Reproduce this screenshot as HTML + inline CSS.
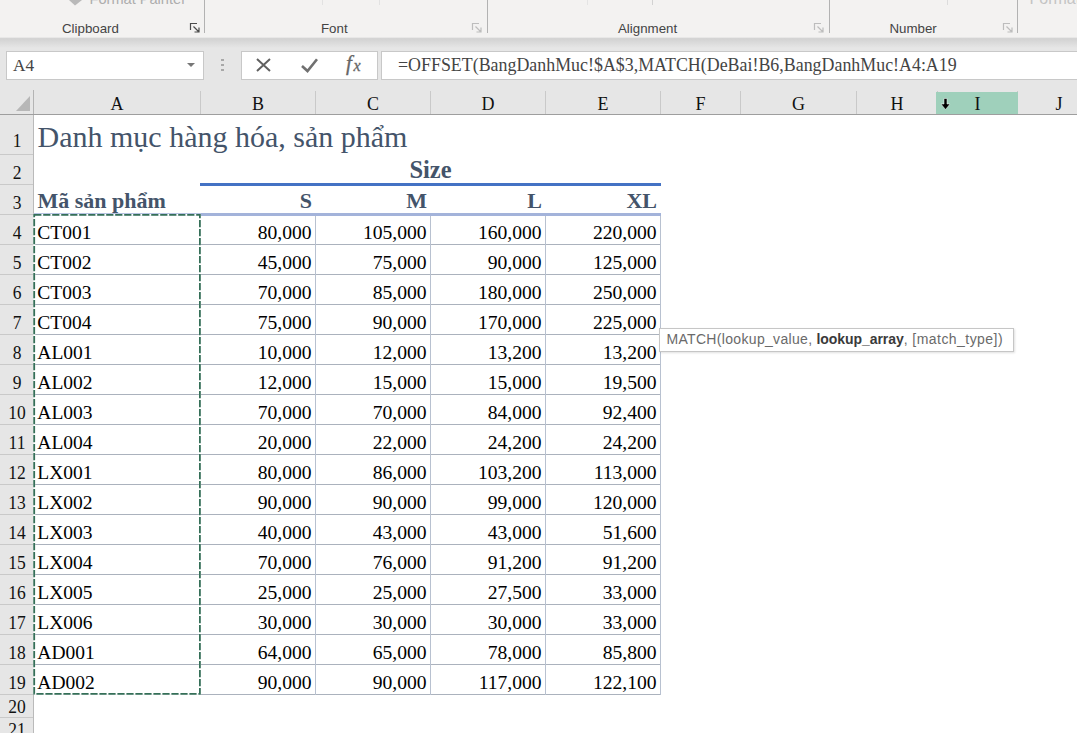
<!DOCTYPE html>
<html><head><meta charset="utf-8"><title>Excel</title>
<style>
html,body{margin:0;padding:0;}
body{width:1077px;height:733px;overflow:hidden;position:relative;background:#fff;font-family:"Liberation Serif",serif;color:#000;}
div,span{position:absolute;box-sizing:border-box;white-space:nowrap;}
svg{position:absolute;overflow:visible;}
#ribbon{left:0;top:0;width:1077px;height:38px;background:#f3f2f1;}
#shadow{left:0;top:37px;width:1077px;height:11px;background:linear-gradient(#f3f2f1 0,#d4d4d4 13%,#d3d3d3 20%,#e6e6e6 100%);}
#fbar{left:0;top:38px;width:1077px;height:77px;background:#e6e6e6;}
.sans{font-family:"Liberation Sans",sans-serif;}
.gsep{top:0;width:1px;height:33px;background:#b2b2b2;}
.box{background:#fff;border:1px solid #c8c8c8;height:29px;top:51px;}
.chs{top:91px;width:1px;height:23px;background:#c9c9c9;}
.rhs{left:0;width:33px;height:1px;background:#c9c9c9;}
.hl{height:1px;background:#abb2bd;}
.vl{width:1px;background:#b8c1d0;}
</style></head><body>

<div id="ribbon"></div><div id="fbar"></div><div id="shadow"></div>
<div class="sans" style="top:19.89px;font-size:13.3px;line-height:17px;color:#444;left:62px;">Clipboard</div>
<div class="sans" style="top:19.89px;font-size:13.3px;line-height:17px;color:#444;left:321px;">Font</div>
<div class="sans" style="top:19.89px;font-size:13.3px;line-height:17px;color:#444;left:618px;">Alignment</div>
<div class="sans" style="top:19.89px;font-size:13.3px;line-height:17px;color:#444;left:889.5px;">Number</div>
<div class="sans" style="top:-10.06px;font-size:14.6px;line-height:19px;color:#adadad;left:89.5px;">Format Painter</div>
<div class="sans" style="top:-11.54px;font-size:16px;line-height:21px;color:#c4c4c4;left:1029.5px;">Format</div>
<svg style="left:68px;top:0" width="15" height="6" viewBox="0 0 15 6"><path d="M1 0L7 5.5L14 0Z" fill="#b9b9b9"/></svg>
<div class="gsep" style="left:204px"></div>
<div class="gsep" style="left:487px"></div>
<div class="gsep" style="left:829px"></div>
<div class="gsep" style="left:1017px"></div>
<div style="left:587px;top:0;width:1px;height:5px;background:#e4e4e4"></div>
<div style="left:652px;top:0;width:1px;height:5px;background:#d2d2d2"></div>
<div style="left:947px;top:0;width:1px;height:5px;background:#dcdcdc"></div>
<div style="left:322px;top:0;width:1px;height:5px;background:#e2e2e2"></div>
<div style="left:379px;top:0;width:1px;height:5px;background:#e2e2e2"></div>
<svg style="left:190px;top:23px" width="10" height="10" viewBox="0 0 10 10"><path d="M0.5 7V0.5H7 M3.5 3.5L9 9 M9 4.5V9H4.5" fill="none" stroke="#4a4a4a" stroke-width="1.2"/></svg>
<svg style="left:472px;top:23px" width="10" height="10" viewBox="0 0 10 10"><path d="M0.5 7V0.5H7 M3.5 3.5L9 9 M9 4.5V9H4.5" fill="none" stroke="#bdbdbd" stroke-width="1.2"/></svg>
<svg style="left:814px;top:23px" width="10" height="10" viewBox="0 0 10 10"><path d="M0.5 7V0.5H7 M3.5 3.5L9 9 M9 4.5V9H4.5" fill="none" stroke="#bdbdbd" stroke-width="1.2"/></svg>
<svg style="left:1003px;top:23px" width="10" height="10" viewBox="0 0 10 10"><path d="M0.5 7V0.5H7 M3.5 3.5L9 9 M9 4.5V9H4.5" fill="none" stroke="#bdbdbd" stroke-width="1.2"/></svg>
<div class="box" style="left:6px;width:198px"></div>
<div style="top:55.16px;font-size:17.3px;line-height:22px;color:#444;left:13px;">A4</div>
<svg style="left:187px;top:63px" width="8" height="4" viewBox="0 0 8 4"><path d="M0 0H8L4 4Z" fill="#777"/></svg>
<div style="left:221px;top:59px;width:3px;height:2px;background:#a8a8a8"></div>
<div style="left:221px;top:64px;width:3px;height:2px;background:#a8a8a8"></div>
<div style="left:221px;top:69px;width:3px;height:2px;background:#a8a8a8"></div>
<div class="box" style="left:241px;width:137px"></div>
<svg style="left:256px;top:58px" width="15" height="14" viewBox="0 0 15 14"><path d="M1 1L14 13M14 1L1 13" stroke="#606060" stroke-width="2" fill="none"/></svg>
<svg style="left:301px;top:58px" width="17" height="14" viewBox="0 0 17 14"><path d="M1 8L6.5 13L16 1.2" stroke="#707070" stroke-width="2.6" fill="none"/></svg>
<div style="top:49.91px;font-size:21px;line-height:27px;color:#666;left:346px;-webkit-text-stroke:0.3px #666;"><i>f</i></div>
<div style="top:54.90px;font-size:16px;line-height:21px;color:#666;left:353.5px;-webkit-text-stroke:0.3px #666;"><i>x</i></div>
<div class="box" style="left:381px;width:710px"></div>
<div style="top:54.46px;font-size:17.9px;line-height:23px;color:#444;left:398px;">=OFFSET(BangDanhMuc!$A$3,MATCH(DeBai!B6,BangDanhMuc!A4:A19</div>
<div style="top:93.12px;font-size:18px;line-height:23px;color:#111;left:33.5px;width:167px;text-align:center;">A</div>
<div class="chs" style="left:200px"></div>
<div style="top:93.12px;font-size:18px;line-height:23px;color:#111;left:200.5px;width:115px;text-align:center;">B</div>
<div class="chs" style="left:315px"></div>
<div style="top:93.12px;font-size:18px;line-height:23px;color:#111;left:315.5px;width:115px;text-align:center;">C</div>
<div class="chs" style="left:430px"></div>
<div style="top:93.12px;font-size:18px;line-height:23px;color:#111;left:430.5px;width:115px;text-align:center;">D</div>
<div class="chs" style="left:545px"></div>
<div style="top:93.12px;font-size:18px;line-height:23px;color:#111;left:545.5px;width:115px;text-align:center;">E</div>
<div class="chs" style="left:660px"></div>
<div style="top:93.12px;font-size:18px;line-height:23px;color:#111;left:660.5px;width:80px;text-align:center;">F</div>
<div class="chs" style="left:740px"></div>
<div style="top:93.12px;font-size:18px;line-height:23px;color:#111;left:740.5px;width:116px;text-align:center;">G</div>
<div class="chs" style="left:856px"></div>
<div style="top:93.12px;font-size:18px;line-height:23px;color:#111;left:856.5px;width:81px;text-align:center;">H</div>
<div class="chs" style="left:937px"></div>
<div class="chs" style="left:1017px"></div>
<div style="top:93.12px;font-size:18px;line-height:23px;color:#111;left:1017.5px;width:83px;text-align:center;">J</div>
<div class="chs" style="left:1100px"></div>
<div style="left:936px;top:92px;width:82px;height:22px;background:#9fd0bb"></div>
<div style="top:93.12px;font-size:18px;line-height:23px;color:#111;left:937.5px;width:80px;text-align:center;">I</div>
<div style="left:0;top:114px;width:1077px;height:1px;background:#9e9e9e"></div>
<div style="left:33px;top:90px;width:1px;height:24px;background:#b4b4b4"></div>
<svg style="left:16px;top:96px" width="14" height="15" viewBox="0 0 14 15"><path d="M14 0V15H0Z" fill="#b7b7b7"/></svg>
<svg style="left:940px;top:98px" width="11" height="12" viewBox="0 0 11 12"><path d="M4 0.5H7V6H10L5.5 11.5L1 6H4Z" fill="#000" stroke="#fff" stroke-width="0.5"/></svg>
<div style="left:0;top:115px;width:33px;height:618px;background:#e6e6e6"></div>
<div style="left:33px;top:115px;width:1px;height:618px;background:#bababa"></div>
<div style="top:129.59px;font-size:17.5px;line-height:23px;color:#111;left:0.5px;width:33px;text-align:center;transform:scaleY(1.05);transform-origin:50% 80%;">1</div>
<div class="rhs" style="top:154px"></div>
<div style="top:162.19px;font-size:17.5px;line-height:23px;color:#111;left:0.5px;width:33px;text-align:center;transform:scaleY(1.05);transform-origin:50% 80%;">2</div>
<div class="rhs" style="top:184px"></div>
<div style="top:192.19px;font-size:17.5px;line-height:23px;color:#111;left:0.5px;width:33px;text-align:center;transform:scaleY(1.05);transform-origin:50% 80%;">3</div>
<div class="rhs" style="top:214px"></div>
<div style="top:222.19px;font-size:17.5px;line-height:23px;color:#111;left:0.5px;width:33px;text-align:center;transform:scaleY(1.05);transform-origin:50% 80%;">4</div>
<div class="rhs" style="top:244px"></div>
<div style="top:252.19px;font-size:17.5px;line-height:23px;color:#111;left:0.5px;width:33px;text-align:center;transform:scaleY(1.05);transform-origin:50% 80%;">5</div>
<div class="rhs" style="top:274px"></div>
<div style="top:282.19px;font-size:17.5px;line-height:23px;color:#111;left:0.5px;width:33px;text-align:center;transform:scaleY(1.05);transform-origin:50% 80%;">6</div>
<div class="rhs" style="top:304px"></div>
<div style="top:312.19px;font-size:17.5px;line-height:23px;color:#111;left:0.5px;width:33px;text-align:center;transform:scaleY(1.05);transform-origin:50% 80%;">7</div>
<div class="rhs" style="top:334px"></div>
<div style="top:342.19px;font-size:17.5px;line-height:23px;color:#111;left:0.5px;width:33px;text-align:center;transform:scaleY(1.05);transform-origin:50% 80%;">8</div>
<div class="rhs" style="top:364px"></div>
<div style="top:372.19px;font-size:17.5px;line-height:23px;color:#111;left:0.5px;width:33px;text-align:center;transform:scaleY(1.05);transform-origin:50% 80%;">9</div>
<div class="rhs" style="top:394px"></div>
<div style="top:402.19px;font-size:17.5px;line-height:23px;color:#111;left:0.5px;width:33px;text-align:center;transform:scaleY(1.05);transform-origin:50% 80%;">10</div>
<div class="rhs" style="top:424px"></div>
<div style="top:432.19px;font-size:17.5px;line-height:23px;color:#111;left:0.5px;width:33px;text-align:center;transform:scaleY(1.05);transform-origin:50% 80%;">11</div>
<div class="rhs" style="top:454px"></div>
<div style="top:462.19px;font-size:17.5px;line-height:23px;color:#111;left:0.5px;width:33px;text-align:center;transform:scaleY(1.05);transform-origin:50% 80%;">12</div>
<div class="rhs" style="top:484px"></div>
<div style="top:492.19px;font-size:17.5px;line-height:23px;color:#111;left:0.5px;width:33px;text-align:center;transform:scaleY(1.05);transform-origin:50% 80%;">13</div>
<div class="rhs" style="top:514px"></div>
<div style="top:522.19px;font-size:17.5px;line-height:23px;color:#111;left:0.5px;width:33px;text-align:center;transform:scaleY(1.05);transform-origin:50% 80%;">14</div>
<div class="rhs" style="top:544px"></div>
<div style="top:552.19px;font-size:17.5px;line-height:23px;color:#111;left:0.5px;width:33px;text-align:center;transform:scaleY(1.05);transform-origin:50% 80%;">15</div>
<div class="rhs" style="top:574px"></div>
<div style="top:582.19px;font-size:17.5px;line-height:23px;color:#111;left:0.5px;width:33px;text-align:center;transform:scaleY(1.05);transform-origin:50% 80%;">16</div>
<div class="rhs" style="top:604px"></div>
<div style="top:612.19px;font-size:17.5px;line-height:23px;color:#111;left:0.5px;width:33px;text-align:center;transform:scaleY(1.05);transform-origin:50% 80%;">17</div>
<div class="rhs" style="top:634px"></div>
<div style="top:642.19px;font-size:17.5px;line-height:23px;color:#111;left:0.5px;width:33px;text-align:center;transform:scaleY(1.05);transform-origin:50% 80%;">18</div>
<div class="rhs" style="top:664px"></div>
<div style="top:672.19px;font-size:17.5px;line-height:23px;color:#111;left:0.5px;width:33px;text-align:center;transform:scaleY(1.05);transform-origin:50% 80%;">19</div>
<div class="rhs" style="top:694px"></div>
<div style="top:696.09px;font-size:17.5px;line-height:23px;color:#111;left:0.5px;width:33px;text-align:center;transform:scaleY(1.05);transform-origin:50% 80%;">20</div>
<div class="rhs" style="top:717px"></div>
<div style="top:719.09px;font-size:17.5px;line-height:23px;color:#111;left:0.5px;width:33px;text-align:center;transform:scaleY(1.05);transform-origin:50% 80%;">21</div>
<div class="rhs" style="top:740px"></div>
<div style="top:117.17px;font-size:30px;line-height:39px;color:#44546a;left:37.5px;">Danh mục hàng hóa, sản phẩm</div>
<div style="top:154.43px;font-size:24.5px;line-height:32px;color:#44546a;font-weight:bold;left:330.5px;width:200px;text-align:center;">Size</div>
<div style="left:200px;top:183px;width:461px;height:3px;background:#4472c4"></div>
<div style="top:185.67px;font-size:22px;line-height:29px;color:#44546a;font-weight:bold;left:37.5px;">Mã sản phẩm</div>
<div style="top:185.67px;font-size:22px;line-height:29px;color:#44546a;font-weight:bold;left:212px;width:100px;text-align:right;">S</div>
<div style="top:185.67px;font-size:22px;line-height:29px;color:#44546a;font-weight:bold;left:327px;width:100px;text-align:right;">M</div>
<div style="top:185.67px;font-size:22px;line-height:29px;color:#44546a;font-weight:bold;left:442px;width:100px;text-align:right;">L</div>
<div style="top:185.67px;font-size:22px;line-height:29px;color:#44546a;font-weight:bold;left:557px;width:100px;text-align:right;">XL</div>
<div style="left:34px;top:213px;width:627px;height:3px;background:#a3b3da"></div>
<div class="hl" style="left:34px;width:627px;top:244px"></div>
<div class="hl" style="left:34px;width:627px;top:274px"></div>
<div class="hl" style="left:34px;width:627px;top:304px"></div>
<div class="hl" style="left:34px;width:627px;top:334px"></div>
<div class="hl" style="left:34px;width:627px;top:364px"></div>
<div class="hl" style="left:34px;width:627px;top:394px"></div>
<div class="hl" style="left:34px;width:627px;top:424px"></div>
<div class="hl" style="left:34px;width:627px;top:454px"></div>
<div class="hl" style="left:34px;width:627px;top:484px"></div>
<div class="hl" style="left:34px;width:627px;top:514px"></div>
<div class="hl" style="left:34px;width:627px;top:544px"></div>
<div class="hl" style="left:34px;width:627px;top:574px"></div>
<div class="hl" style="left:34px;width:627px;top:604px"></div>
<div class="hl" style="left:34px;width:627px;top:634px"></div>
<div class="hl" style="left:34px;width:627px;top:664px"></div>
<div class="hl" style="left:34px;width:627px;top:694px"></div>
<div class="vl" style="left:315px;top:216px;height:479px"></div>
<div class="vl" style="left:430px;top:216px;height:479px"></div>
<div class="vl" style="left:545px;top:216px;height:479px"></div>
<div class="vl" style="left:660px;top:216px;height:479px"></div>
<div style="top:219.72px;font-size:19.5px;line-height:25px;color:#000;left:37.3px;transform:scaleY(0.93);transform-origin:50% 80%;">CT001</div>
<div style="top:219.69px;font-size:19.6px;line-height:25px;color:#000;left:211.60000000000002px;width:100px;text-align:right;transform:scaleY(0.93);transform-origin:50% 80%;">80,000</div>
<div style="top:219.69px;font-size:19.6px;line-height:25px;color:#000;left:326.6px;width:100px;text-align:right;transform:scaleY(0.93);transform-origin:50% 80%;">105,000</div>
<div style="top:219.69px;font-size:19.6px;line-height:25px;color:#000;left:441.6px;width:100px;text-align:right;transform:scaleY(0.93);transform-origin:50% 80%;">160,000</div>
<div style="top:219.69px;font-size:19.6px;line-height:25px;color:#000;left:556.6px;width:100px;text-align:right;transform:scaleY(0.93);transform-origin:50% 80%;">220,000</div>
<div style="top:249.72px;font-size:19.5px;line-height:25px;color:#000;left:37.3px;transform:scaleY(0.93);transform-origin:50% 80%;">CT002</div>
<div style="top:249.68px;font-size:19.6px;line-height:25px;color:#000;left:211.60000000000002px;width:100px;text-align:right;transform:scaleY(0.93);transform-origin:50% 80%;">45,000</div>
<div style="top:249.68px;font-size:19.6px;line-height:25px;color:#000;left:326.6px;width:100px;text-align:right;transform:scaleY(0.93);transform-origin:50% 80%;">75,000</div>
<div style="top:249.68px;font-size:19.6px;line-height:25px;color:#000;left:441.6px;width:100px;text-align:right;transform:scaleY(0.93);transform-origin:50% 80%;">90,000</div>
<div style="top:249.68px;font-size:19.6px;line-height:25px;color:#000;left:556.6px;width:100px;text-align:right;transform:scaleY(0.93);transform-origin:50% 80%;">125,000</div>
<div style="top:279.72px;font-size:19.5px;line-height:25px;color:#000;left:37.3px;transform:scaleY(0.93);transform-origin:50% 80%;">CT003</div>
<div style="top:279.69px;font-size:19.6px;line-height:25px;color:#000;left:211.60000000000002px;width:100px;text-align:right;transform:scaleY(0.93);transform-origin:50% 80%;">70,000</div>
<div style="top:279.69px;font-size:19.6px;line-height:25px;color:#000;left:326.6px;width:100px;text-align:right;transform:scaleY(0.93);transform-origin:50% 80%;">85,000</div>
<div style="top:279.69px;font-size:19.6px;line-height:25px;color:#000;left:441.6px;width:100px;text-align:right;transform:scaleY(0.93);transform-origin:50% 80%;">180,000</div>
<div style="top:279.69px;font-size:19.6px;line-height:25px;color:#000;left:556.6px;width:100px;text-align:right;transform:scaleY(0.93);transform-origin:50% 80%;">250,000</div>
<div style="top:309.72px;font-size:19.5px;line-height:25px;color:#000;left:37.3px;transform:scaleY(0.93);transform-origin:50% 80%;">CT004</div>
<div style="top:309.69px;font-size:19.6px;line-height:25px;color:#000;left:211.60000000000002px;width:100px;text-align:right;transform:scaleY(0.93);transform-origin:50% 80%;">75,000</div>
<div style="top:309.69px;font-size:19.6px;line-height:25px;color:#000;left:326.6px;width:100px;text-align:right;transform:scaleY(0.93);transform-origin:50% 80%;">90,000</div>
<div style="top:309.69px;font-size:19.6px;line-height:25px;color:#000;left:441.6px;width:100px;text-align:right;transform:scaleY(0.93);transform-origin:50% 80%;">170,000</div>
<div style="top:309.69px;font-size:19.6px;line-height:25px;color:#000;left:556.6px;width:100px;text-align:right;transform:scaleY(0.93);transform-origin:50% 80%;">225,000</div>
<div style="top:339.72px;font-size:19.5px;line-height:25px;color:#000;left:37.3px;transform:scaleY(0.93);transform-origin:50% 80%;">AL001</div>
<div style="top:339.69px;font-size:19.6px;line-height:25px;color:#000;left:211.60000000000002px;width:100px;text-align:right;transform:scaleY(0.93);transform-origin:50% 80%;">10,000</div>
<div style="top:339.69px;font-size:19.6px;line-height:25px;color:#000;left:326.6px;width:100px;text-align:right;transform:scaleY(0.93);transform-origin:50% 80%;">12,000</div>
<div style="top:339.69px;font-size:19.6px;line-height:25px;color:#000;left:441.6px;width:100px;text-align:right;transform:scaleY(0.93);transform-origin:50% 80%;">13,200</div>
<div style="top:339.69px;font-size:19.6px;line-height:25px;color:#000;left:556.6px;width:100px;text-align:right;transform:scaleY(0.93);transform-origin:50% 80%;">13,200</div>
<div style="top:369.72px;font-size:19.5px;line-height:25px;color:#000;left:37.3px;transform:scaleY(0.93);transform-origin:50% 80%;">AL002</div>
<div style="top:369.69px;font-size:19.6px;line-height:25px;color:#000;left:211.60000000000002px;width:100px;text-align:right;transform:scaleY(0.93);transform-origin:50% 80%;">12,000</div>
<div style="top:369.69px;font-size:19.6px;line-height:25px;color:#000;left:326.6px;width:100px;text-align:right;transform:scaleY(0.93);transform-origin:50% 80%;">15,000</div>
<div style="top:369.69px;font-size:19.6px;line-height:25px;color:#000;left:441.6px;width:100px;text-align:right;transform:scaleY(0.93);transform-origin:50% 80%;">15,000</div>
<div style="top:369.69px;font-size:19.6px;line-height:25px;color:#000;left:556.6px;width:100px;text-align:right;transform:scaleY(0.93);transform-origin:50% 80%;">19,500</div>
<div style="top:399.72px;font-size:19.5px;line-height:25px;color:#000;left:37.3px;transform:scaleY(0.93);transform-origin:50% 80%;">AL003</div>
<div style="top:399.69px;font-size:19.6px;line-height:25px;color:#000;left:211.60000000000002px;width:100px;text-align:right;transform:scaleY(0.93);transform-origin:50% 80%;">70,000</div>
<div style="top:399.69px;font-size:19.6px;line-height:25px;color:#000;left:326.6px;width:100px;text-align:right;transform:scaleY(0.93);transform-origin:50% 80%;">70,000</div>
<div style="top:399.69px;font-size:19.6px;line-height:25px;color:#000;left:441.6px;width:100px;text-align:right;transform:scaleY(0.93);transform-origin:50% 80%;">84,000</div>
<div style="top:399.69px;font-size:19.6px;line-height:25px;color:#000;left:556.6px;width:100px;text-align:right;transform:scaleY(0.93);transform-origin:50% 80%;">92,400</div>
<div style="top:429.72px;font-size:19.5px;line-height:25px;color:#000;left:37.3px;transform:scaleY(0.93);transform-origin:50% 80%;">AL004</div>
<div style="top:429.69px;font-size:19.6px;line-height:25px;color:#000;left:211.60000000000002px;width:100px;text-align:right;transform:scaleY(0.93);transform-origin:50% 80%;">20,000</div>
<div style="top:429.69px;font-size:19.6px;line-height:25px;color:#000;left:326.6px;width:100px;text-align:right;transform:scaleY(0.93);transform-origin:50% 80%;">22,000</div>
<div style="top:429.69px;font-size:19.6px;line-height:25px;color:#000;left:441.6px;width:100px;text-align:right;transform:scaleY(0.93);transform-origin:50% 80%;">24,200</div>
<div style="top:429.69px;font-size:19.6px;line-height:25px;color:#000;left:556.6px;width:100px;text-align:right;transform:scaleY(0.93);transform-origin:50% 80%;">24,200</div>
<div style="top:459.72px;font-size:19.5px;line-height:25px;color:#000;left:37.3px;transform:scaleY(0.93);transform-origin:50% 80%;">LX001</div>
<div style="top:459.69px;font-size:19.6px;line-height:25px;color:#000;left:211.60000000000002px;width:100px;text-align:right;transform:scaleY(0.93);transform-origin:50% 80%;">80,000</div>
<div style="top:459.69px;font-size:19.6px;line-height:25px;color:#000;left:326.6px;width:100px;text-align:right;transform:scaleY(0.93);transform-origin:50% 80%;">86,000</div>
<div style="top:459.69px;font-size:19.6px;line-height:25px;color:#000;left:441.6px;width:100px;text-align:right;transform:scaleY(0.93);transform-origin:50% 80%;">103,200</div>
<div style="top:459.69px;font-size:19.6px;line-height:25px;color:#000;left:556.6px;width:100px;text-align:right;transform:scaleY(0.93);transform-origin:50% 80%;">113,000</div>
<div style="top:489.72px;font-size:19.5px;line-height:25px;color:#000;left:37.3px;transform:scaleY(0.93);transform-origin:50% 80%;">LX002</div>
<div style="top:489.69px;font-size:19.6px;line-height:25px;color:#000;left:211.60000000000002px;width:100px;text-align:right;transform:scaleY(0.93);transform-origin:50% 80%;">90,000</div>
<div style="top:489.69px;font-size:19.6px;line-height:25px;color:#000;left:326.6px;width:100px;text-align:right;transform:scaleY(0.93);transform-origin:50% 80%;">90,000</div>
<div style="top:489.69px;font-size:19.6px;line-height:25px;color:#000;left:441.6px;width:100px;text-align:right;transform:scaleY(0.93);transform-origin:50% 80%;">99,000</div>
<div style="top:489.69px;font-size:19.6px;line-height:25px;color:#000;left:556.6px;width:100px;text-align:right;transform:scaleY(0.93);transform-origin:50% 80%;">120,000</div>
<div style="top:519.72px;font-size:19.5px;line-height:25px;color:#000;left:37.3px;transform:scaleY(0.93);transform-origin:50% 80%;">LX003</div>
<div style="top:519.68px;font-size:19.6px;line-height:25px;color:#000;left:211.60000000000002px;width:100px;text-align:right;transform:scaleY(0.93);transform-origin:50% 80%;">40,000</div>
<div style="top:519.68px;font-size:19.6px;line-height:25px;color:#000;left:326.6px;width:100px;text-align:right;transform:scaleY(0.93);transform-origin:50% 80%;">43,000</div>
<div style="top:519.68px;font-size:19.6px;line-height:25px;color:#000;left:441.6px;width:100px;text-align:right;transform:scaleY(0.93);transform-origin:50% 80%;">43,000</div>
<div style="top:519.68px;font-size:19.6px;line-height:25px;color:#000;left:556.6px;width:100px;text-align:right;transform:scaleY(0.93);transform-origin:50% 80%;">51,600</div>
<div style="top:549.72px;font-size:19.5px;line-height:25px;color:#000;left:37.3px;transform:scaleY(0.93);transform-origin:50% 80%;">LX004</div>
<div style="top:549.68px;font-size:19.6px;line-height:25px;color:#000;left:211.60000000000002px;width:100px;text-align:right;transform:scaleY(0.93);transform-origin:50% 80%;">70,000</div>
<div style="top:549.68px;font-size:19.6px;line-height:25px;color:#000;left:326.6px;width:100px;text-align:right;transform:scaleY(0.93);transform-origin:50% 80%;">76,000</div>
<div style="top:549.68px;font-size:19.6px;line-height:25px;color:#000;left:441.6px;width:100px;text-align:right;transform:scaleY(0.93);transform-origin:50% 80%;">91,200</div>
<div style="top:549.68px;font-size:19.6px;line-height:25px;color:#000;left:556.6px;width:100px;text-align:right;transform:scaleY(0.93);transform-origin:50% 80%;">91,200</div>
<div style="top:579.72px;font-size:19.5px;line-height:25px;color:#000;left:37.3px;transform:scaleY(0.93);transform-origin:50% 80%;">LX005</div>
<div style="top:579.68px;font-size:19.6px;line-height:25px;color:#000;left:211.60000000000002px;width:100px;text-align:right;transform:scaleY(0.93);transform-origin:50% 80%;">25,000</div>
<div style="top:579.68px;font-size:19.6px;line-height:25px;color:#000;left:326.6px;width:100px;text-align:right;transform:scaleY(0.93);transform-origin:50% 80%;">25,000</div>
<div style="top:579.68px;font-size:19.6px;line-height:25px;color:#000;left:441.6px;width:100px;text-align:right;transform:scaleY(0.93);transform-origin:50% 80%;">27,500</div>
<div style="top:579.68px;font-size:19.6px;line-height:25px;color:#000;left:556.6px;width:100px;text-align:right;transform:scaleY(0.93);transform-origin:50% 80%;">33,000</div>
<div style="top:609.72px;font-size:19.5px;line-height:25px;color:#000;left:37.3px;transform:scaleY(0.93);transform-origin:50% 80%;">LX006</div>
<div style="top:609.68px;font-size:19.6px;line-height:25px;color:#000;left:211.60000000000002px;width:100px;text-align:right;transform:scaleY(0.93);transform-origin:50% 80%;">30,000</div>
<div style="top:609.68px;font-size:19.6px;line-height:25px;color:#000;left:326.6px;width:100px;text-align:right;transform:scaleY(0.93);transform-origin:50% 80%;">30,000</div>
<div style="top:609.68px;font-size:19.6px;line-height:25px;color:#000;left:441.6px;width:100px;text-align:right;transform:scaleY(0.93);transform-origin:50% 80%;">30,000</div>
<div style="top:609.68px;font-size:19.6px;line-height:25px;color:#000;left:556.6px;width:100px;text-align:right;transform:scaleY(0.93);transform-origin:50% 80%;">33,000</div>
<div style="top:639.72px;font-size:19.5px;line-height:25px;color:#000;left:37.3px;transform:scaleY(0.93);transform-origin:50% 80%;">AD001</div>
<div style="top:639.68px;font-size:19.6px;line-height:25px;color:#000;left:211.60000000000002px;width:100px;text-align:right;transform:scaleY(0.93);transform-origin:50% 80%;">64,000</div>
<div style="top:639.68px;font-size:19.6px;line-height:25px;color:#000;left:326.6px;width:100px;text-align:right;transform:scaleY(0.93);transform-origin:50% 80%;">65,000</div>
<div style="top:639.68px;font-size:19.6px;line-height:25px;color:#000;left:441.6px;width:100px;text-align:right;transform:scaleY(0.93);transform-origin:50% 80%;">78,000</div>
<div style="top:639.68px;font-size:19.6px;line-height:25px;color:#000;left:556.6px;width:100px;text-align:right;transform:scaleY(0.93);transform-origin:50% 80%;">85,800</div>
<div style="top:669.72px;font-size:19.5px;line-height:25px;color:#000;left:37.3px;transform:scaleY(0.93);transform-origin:50% 80%;">AD002</div>
<div style="top:669.68px;font-size:19.6px;line-height:25px;color:#000;left:211.60000000000002px;width:100px;text-align:right;transform:scaleY(0.93);transform-origin:50% 80%;">90,000</div>
<div style="top:669.68px;font-size:19.6px;line-height:25px;color:#000;left:326.6px;width:100px;text-align:right;transform:scaleY(0.93);transform-origin:50% 80%;">90,000</div>
<div style="top:669.68px;font-size:19.6px;line-height:25px;color:#000;left:441.6px;width:100px;text-align:right;transform:scaleY(0.93);transform-origin:50% 80%;">117,000</div>
<div style="top:669.68px;font-size:19.6px;line-height:25px;color:#000;left:556.6px;width:100px;text-align:right;transform:scaleY(0.93);transform-origin:50% 80%;">122,100</div>
<svg style="left:33px;top:213px" width="170" height="483" viewBox="0 0 170 483"><rect x="1.2" y="1.8" width="165.7" height="479" fill="none" stroke="#fff" stroke-width="2"/><rect x="1.2" y="1.8" width="165.7" height="479" fill="none" stroke="#356f58" stroke-width="1.8" stroke-dasharray="7.2 1.8"/></svg>
<div style="left:659px;top:328px;width:355px;height:24px;background:#fff;border:1px solid #c6c6c6;box-shadow:1px 1px 2px rgba(0,0,0,.12)"></div>
<div class="sans" style="top:330.25px;font-size:14px;line-height:18px;color:#6a6a6a;left:666.4px;letter-spacing:0.33px;white-space:pre;">MATCH(lookup_value, </div>
<div class="sans" style="top:330.25px;font-size:14px;line-height:18px;color:#3a3a3a;font-weight:bold;left:816.5px;letter-spacing:-0.06px;">lookup_array</div>
<div class="sans" style="top:330.25px;font-size:14px;line-height:18px;color:#6a6a6a;left:903.7px;letter-spacing:0.45px;white-space:pre;">, [match_type])</div>
</body></html>
